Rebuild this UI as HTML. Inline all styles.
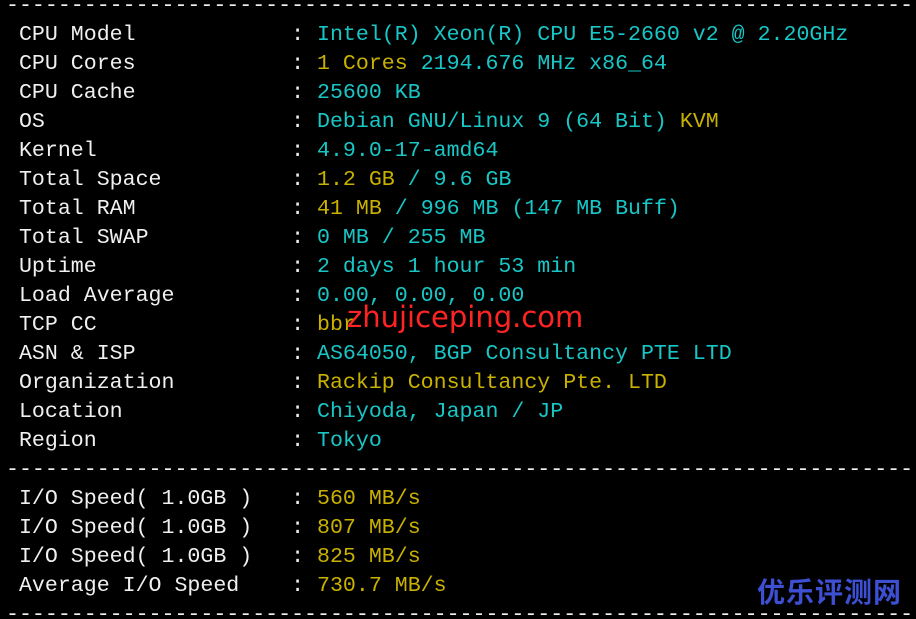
<!DOCTYPE html>
<html><head><meta charset="utf-8"><style>
html,body{margin:0;padding:0;background:#000;width:916px;height:619px;overflow:hidden;position:relative}
pre{position:absolute;left:6px;top:-8px;margin:0;font-family:"Liberation Mono",monospace;font-size:21.6px;line-height:29px;color:#f0f0f0;letter-spacing:0}
.c{color:#19c6c6}.y{color:#c9b100}
.wm{position:absolute;left:347px;top:300px;font-family:"DejaVu Sans",sans-serif;font-size:29px;color:#ff2424;letter-spacing:0}
.logo{position:absolute;left:757px;top:574px;font-family:"Noto Sans CJK SC",sans-serif;font-weight:bold;font-size:28px;line-height:34px;color:#3d4fd2;letter-spacing:1px}
</style></head><body>
<pre>----------------------------------------------------------------------
 CPU Model            : <span class="c">Intel(R) Xeon(R) CPU E5-2660 v2 @ 2.20GHz</span>
 CPU Cores            : <span class="y">1 Cores</span> <span class="c">2194.676 MHz x86_64</span>
 CPU Cache            : <span class="c">25600 KB</span>
 OS                   : <span class="c">Debian GNU/Linux 9 (64 Bit)</span> <span class="y">KVM</span>
 Kernel               : <span class="c">4.9.0-17-amd64</span>
 Total Space          : <span class="y">1.2 GB</span> <span class="c">/ 9.6 GB</span>
 Total RAM            : <span class="y">41 MB</span> <span class="c">/ 996 MB (147 MB Buff)</span>
 Total SWAP           : <span class="c">0 MB / 255 MB</span>
 Uptime               : <span class="c">2 days 1 hour 53 min</span>
 Load Average         : <span class="c">0.00, 0.00, 0.00</span>
 TCP CC               : <span class="y">bbr</span>
 ASN &amp; ISP            : <span class="c">AS64050, BGP Consultancy PTE LTD</span>
 Organization         : <span class="y">Rackip Consultancy Pte. LTD</span>
 Location             : <span class="c">Chiyoda, Japan / JP</span>
 Region               : <span class="c">Tokyo</span>
----------------------------------------------------------------------
 I/O Speed( 1.0GB )   : <span class="y">560 MB/s</span>
 I/O Speed( 1.0GB )   : <span class="y">807 MB/s</span>
 I/O Speed( 1.0GB )   : <span class="y">825 MB/s</span>
 Average I/O Speed    : <span class="y">730.7 MB/s</span>
----------------------------------------------------------------------</pre>
<div class="wm">zhujiceping.com</div>
<div class="logo">优乐评测网</div>
</body></html>
